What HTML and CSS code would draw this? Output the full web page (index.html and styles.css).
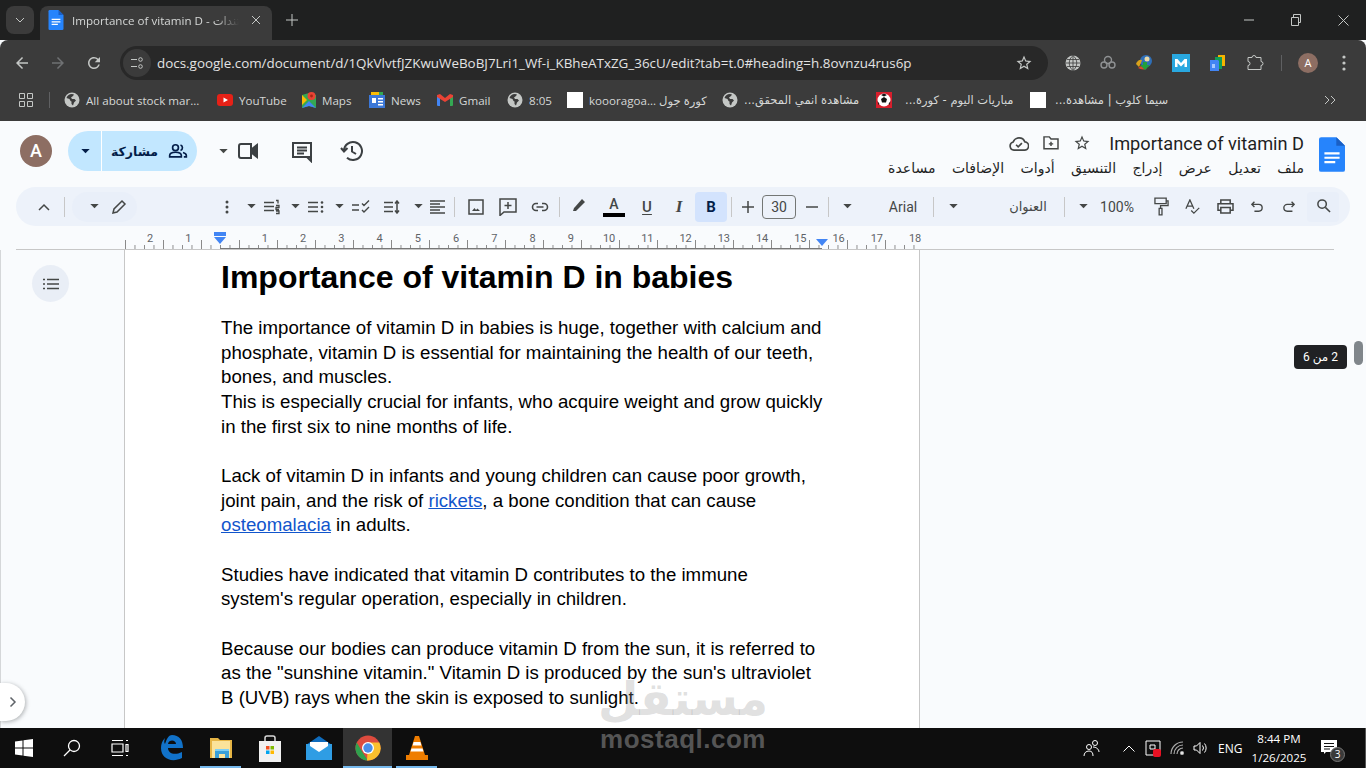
FILE: index.html
```html
<!doctype html>
<html lang="en">
<head>
  <meta charset="utf-8" />
  <title>Importance of vitamin D</title>
  <link rel="stylesheet" href="styles.css">
</head>
<body>
<svg class="defs" width="0" height="0">
  <symbol id="docs" viewBox="0 0 24 32"><path fill="#2684fc" d="M2 0h14l8 8v22a2 2 0 0 1-2 2H2a2 2 0 0 1-2-2V2a2 2 0 0 1 2-2z"/><path fill="#1a5fc4" d="M16 0l8 8h-8z"/><path fill="#fff" d="M5 14h14v2H5zM5 18h14v2H5zM5 22h10v2H5z"/></symbol>
  <symbol id="globe" viewBox="0 0 16 16"><circle cx="8" cy="8" r="7.5" fill="#c4c7c5"/><path fill="#3b3b3b" d="M8 2C5 2 3 4 2.5 6l3 1 1 2 1 .5V12l1.5 1.500 1-3 2-2-1.500-1.500H8L7 5.500l2-1.500L10 2.500z"/></symbol>
  <symbol id="caret" viewBox="0 0 10 6"><path fill="currentColor" d="M0 0h10L5 5z"/></symbol>
  <symbol id="star" viewBox="0 0 24 24"><path fill="currentColor" d="M22 9.240l-7.190-.62L12 2 9.190 8.630 2 9.240l5.460 4.730L5.820 21 12 17.270 18.180 21l-1.630-7.030L22 9.240zM12 15.400l-3.760 2.270 1-4.280-3.320-2.880 4.380-.38L12 6.100l1.710 4.040 4.380.38-3.320 2.880 1 4.280L12 15.400z"/></symbol>
</svg>

<div class="tabstrip">
  <div class="tabmenu"><svg width="12" height="12" viewBox="0 0 12 12"><path d="M2 4l4 4 4-4" class="ln" stroke-width="1.800"/></svg></div>
  <div class="tab">
    <svg class="favicon" width="16" height="20"><use href="#docs"/></svg>
    <span class="tabtitle">Importance of vitamin D - مستندات Google</span>
    <svg width="10" height="10" viewBox="0 0 10 10"><path d="M1 1l8 8M9 1l-8 8" class="ln" stroke-width="1.500"/></svg>
  </div>
  <svg class="newtab" width="12" height="12" viewBox="0 0 12 12"><path d="M6 0v12M0 6h12" class="ln" stroke-width="1.600"/></svg>
  <div class="winctl">
    <svg width="10" height="10" viewBox="0 0 10 10"><path d="M0 5h10" class="ln"/></svg>
    <svg width="10" height="12" viewBox="0 0 10 12"><path d="M.5 3.500h7v8h-7zM2.500 3.500v-3h7v8h-2" class="ln"/></svg>
    <svg width="11" height="11" viewBox="0 0 11 11"><path d="M.5.500l10 10M10.500.500l-10 10" class="ln"/></svg>
  </div>
</div>

<div class="navbar">
  <svg class="nav" width="18" height="18" viewBox="0 0 24 24"><path fill="#c4c7c5" d="M20 11H7.830l5.590-5.590L12 4l-8 8 8 8 1.410-1.410L7.830 13H20v-2z"/></svg>
  <svg class="nav" width="18" height="18" viewBox="0 0 24 24"><path fill="#6f7173" d="M12 4l-1.410 1.410L16.170 11H4v2h12.170l-5.580 5.590L12 20l8-8z"/></svg>
  <svg class="nav" width="18" height="18" viewBox="0 0 24 24"><path fill="#c4c7c5" d="M17.650 6.350A7.958 7.958 0 0 0 12 4c-4.420 0-7.990 3.580-7.990 8s3.570 8 7.990 8c3.730 0 6.840-2.550 7.730-6h-2.080A5.990 5.990 0 0 1 12 18c-3.310 0-6-2.690-6-6s2.690-6 6-6c1.660 0 3.140.69 4.220 1.780L13 11h7V4l-2.350 2.350z"/></svg>
  <div class="omni">
    <span class="tune"><svg width="14" height="14" viewBox="0 0 14 14"><path d="M1 3.500h6M1 10.500h6" class="ln" stroke-width="1.400"/><circle cx="10.500" cy="3.500" r="1.800" class="ln" stroke-width="1.400"/><circle cx="10.500" cy="10.500" r="1.800" class="ln" stroke-width="1.400"/></svg></span>
    <span class="url">docs.google.com/document/d/1QkVlvtfJZKwuWeBoBJ7Lri1_Wf-i_KBheATxZG_36cU/edit?tab=t.0#heading=h.8ovnzu4rus6p</span>
    <svg class="urlstar" width="18" height="18"><use href="#star"/></svg>
  </div>
  <div class="exts">
    <svg width="16" height="16" viewBox="0 0 16 16"><circle cx="8" cy="8" r="7.500" fill="#c4c7c5"/><path d="M.5 8h15M2 4.500h12M2 11.500h12M8 .5v15M8 .5c-5 4-5 11 0 15M8 .5c5 4 5 11 0 15" stroke="#3b3b3b" stroke-width=".8" fill="none"/></svg>
    <svg width="16" height="16" viewBox="0 0 16 16" fill="none" stroke="#8f9193" stroke-width="1.400"><circle cx="8" cy="5" r="3.500"/><circle cx="4" cy="10" r="3"/><circle cx="12" cy="10" r="3"/></svg>
    <svg width="18" height="18" viewBox="0 0 18 18"><circle cx="11" cy="7" r="6" fill="#2f6fb8"/><circle cx="12" cy="5" r="2.500" fill="#e9d9a8"/><path d="M1 10a5 5 0 0 1 6-4l-1 3-2 4z" fill="#d9a21b"/><path d="M3 14a7 3 0 0 0 9 1l-6-3z" fill="#d84a2b"/><path d="M8 8h4v3h3l-5 5-5-5h3z" fill="#22a03c"/></svg>
    <svg width="18" height="18" viewBox="0 0 18 18"><path fill="#29a8e0" d="M0 0h18v18H0z"/><path fill="#fff" d="M3 13V5h2.500L9 9l3.500-4H15v8h-2.500V9L9 12.500 5.500 9v4z"/></svg>
    <svg width="18" height="18" viewBox="0 0 18 18"><path fill="#f4b400" d="M9 1h7v11H9z"/><path fill="#0f9d58" d="M6 3h7v12H6z"/><path fill="#4285f4" d="M1 6h8l1 1v10H1z"/><path fill="#a6c8ff" d="M3 10h3v4H3z"/></svg>
    <svg width="18" height="18" viewBox="0 0 18 18"><path d="M2 3.500h4a2 2 0 0 1 4 0h5v4a2 2 0 0 1 0 4v4H2v-4a2 2 0 0 0 0-4z" class="ln" stroke-width="1.500"/></svg>
  </div>
  <i class="navsep"></i>
  <span class="profile">A</span>
  <svg class="kebab" width="4" height="16" viewBox="0 0 4 16"><circle cx="2" cy="2" r="1.600" fill="#c4c7c5"/><circle cx="2" cy="8" r="1.600" fill="#c4c7c5"/><circle cx="2" cy="14" r="1.600" fill="#c4c7c5"/></svg>
</div>

<div class="bookmarks">
  <svg width="16" height="16" viewBox="0 0 16 16"><path d="M1.500 1.500h5v5h-5zM9.500 1.500h5v5h-5zM1.500 9.500h5v5h-5zM9.500 9.500h5v5h-5z" class="ln" stroke-width="1.400"/></svg>
  <i class="bmsep"></i>
  <a class="bm"><svg width="16" height="16"><use href="#globe"/></svg>All about stock mar...</a>
  <a class="bm"><svg width="16" height="16" viewBox="0 0 16 16"><rect y="2" width="16" height="12" rx="3" fill="#e62117"/><path d="M6.500 5.500v5L11 8z" fill="#fff"/></svg>YouTube</a>
  <a class="bm"><svg width="14" height="18" viewBox="0 0 14 18"><path fill="#34a853" d="M0 4l7-2 7 2v13l-7-2-7 2z"/><path fill="#4285f4" d="M0 17l7-7 7 7-7-2z"/><path fill="#fbbc04" d="M0 4l5 5-5 5z"/><circle cx="9.500" cy="5" r="4" fill="#ea4335"/><circle cx="9.500" cy="5" r="1.400" fill="#a52714"/></svg>Maps</a>
  <a class="bm"><svg width="16" height="16" viewBox="0 0 16 16"><path fill="#fbbc04" d="M2 0h8v4H2z"/><path fill="#34a853" d="M10 0h4v4h-4z"/><path fill="#3c78d8" d="M0 3h16v13H0z"/><path fill="#fff" d="M3 6h4v5H3zM9 6h5v1.500H9zM9 9h5v1.500H9zM9 12h5v1.500H9z"/></svg>News</a>
  <a class="bm"><svg width="16" height="12" viewBox="0 0 16 12"><path fill="#4285f4" d="M0 1h3v11H1a1 1 0 0 1-1-1z"/><path fill="#34a853" d="M13 1h3v10a1 1 0 0 1-1 1h-2z"/><path fill="#ea4335" d="M0 1l3-1 5 4 5-4 3 1v2L8 8 0 3z"/></svg>Gmail</a>
  <a class="bm"><svg width="16" height="16"><use href="#globe"/></svg>8:05</a>
  <a class="bm"><b class="blank"></b>koooragoa... كورة جول</a>
  <a class="bm"><svg width="16" height="16"><use href="#globe"/></svg><span class="ar" dir="rtl">مشاهدة انمي المحقق...</span></a>
  <a class="bm wide"><svg width="16" height="16" viewBox="0 0 16 16"><path fill="#d81e2c" d="M0 0h16v16H0z"/><circle cx="8" cy="8" r="6.500" fill="#fff"/><path d="M8 5l3 2-1 3.500H6L5 7zM8 1.500L11 3l-3 1.500L5 3zM1.500 9l2 3-1 1zM14.500 9l-2 3 1 1z" fill="#111"/></svg><span class="ar" dir="rtl">مباريات اليوم - كورة...</span></a>
  <a class="bm wide2"><b class="blank"></b><span class="ar" dir="rtl">سيما كلوب | مشاهدة...</span></a>
  <svg class="more" width="12" height="10" viewBox="0 0 12 10"><path d="M1 1l4 4-4 4M7 1l4 4-4 4" class="ln" stroke-width="1.400"/></svg>
</div>

<div class="docs">
  <header class="dochead">
    <div class="headleft">
      <span class="docavatar">A</span>
      <div class="share">
        <span class="sharecaret"><svg width="9" height="5"><use href="#caret"/></svg></span>
        <span class="sharemain">
          <span class="ar">مشاركة</span>
          <svg width="20" height="20" viewBox="0 0 24 24" fill="none" stroke="#041e49" stroke-width="2"><circle cx="9" cy="8" r="3.500"/><path d="M2 19v-1.500c0-2.500 3-4 7-4s7 1.500 7 4V19zM15 4.700a3.500 3.500 0 0 1 0 6.600M18 13.800c2.500.7 4 2 4 3.700V19h-3"/></svg>
        </span>
      </div>
      <svg class="vidcaret" width="9" height="5"><use href="#caret"/></svg>
      <svg class="hicon video" width="24" height="24" viewBox="0 0 24 24" fill="none" stroke="#3c4043" stroke-width="2"><path d="M3 7a2 2 0 0 1 2-2h10v14H5a2 2 0 0 1-2-2z"/><path d="M16 10l5-4v12l-5-4z" fill="#3c4043"/></svg>
      <svg class="hicon comment" width="24" height="24" viewBox="0 0 24 24" fill="none" stroke="#3c4043" stroke-width="2"><path d="M3 4h18v14H3zM21 18v4l-4-4M7 8.500h10M7 11.500h10M7 14.500h7"/></svg>
      <svg class="hicon history" width="24" height="24" viewBox="0 0 24 24" fill="none" stroke="#3c4043" stroke-width="2"><path d="M4 12a9 9 0 1 1 3 6.700M1 9l3 3.500L7.500 9M12 7v5.500l4 2.500"/></svg>
    </div>
    <div class="headright">
      <div class="titleblock">
        <div class="titlerow">
          <svg width="20" height="17" viewBox="0 0 24 20" fill="none" stroke="#444746" stroke-width="2"><path d="M6 18a5 5 0 0 1-1-9.800A7.500 7.500 0 0 1 19 8a5 5 0 0 1-1 10zM8.500 11.500l2.500 2.500 4.500-4.500"/></svg>
          <svg width="16" height="14" viewBox="0 0 18 16" fill="none" stroke="#444746" stroke-width="1.700"><path d="M1 3V14.500h16V3.500H9L7 1H1zM9 6.500v5M6.500 9h5"/></svg>
          <svg class="titlestar" width="18" height="18"><use href="#star"/></svg>
          <span class="doctitle">Importance of vitamin D</span>
        </div>
        <nav class="menu">
          <span>ملف</span><span>تعديل</span><span>عرض</span><span>إدراج</span><span>التنسيق</span><span>أدوات</span><span>الإضافات</span><span>مساعدة</span>
        </nav>
      </div>
      <svg class="doclogo" width="26" height="35"><use href="#docs"/></svg>
    </div>
  </header>

  <div class="toolbar">
    <span class="t"><svg width="12" height="8" viewBox="0 0 12 8"><path d="M1 7l5-5 5 5" class="tl" stroke-width="1.500"/></svg></span>
    <i class="sep ml4"></i>
    <span class="pencil ml7">
      <svg width="9" height="5"><use href="#caret"/></svg>
      <svg width="16" height="16" viewBox="0 0 16 16"><path d="M2 14l1-4 8-8 3 3-8 8z" class="tl" stroke-width="1.500"/></svg>
    </span>
    <span class="t ml74"><svg width="4" height="14" viewBox="0 0 4 14"><circle cx="2" cy="2" r="1.500"/><circle cx="2" cy="7" r="1.500"/><circle cx="2" cy="12" r="1.500"/></svg></span>
    <span class="c w16"><svg width="9" height="5"><use href="#caret"/></svg></span>
    <span class="t w26"><svg width="16" height="16" viewBox="0 0 16 16"><path d="M0 3.500h10M0 7.500h10M0 11.500h10M12 1.500h2v3M12 6.500h3v2h-3v2h3M12 12h3v2.500h-3" class="tl" stroke-width="1.300"/></svg></span>
    <span class="c w20"><svg width="9" height="5"><use href="#caret"/></svg></span>
    <span class="t w22"><svg width="16" height="14" viewBox="0 0 16 14"><path d="M0 2.500h10M0 7h10M0 11.500h10" class="tl" stroke-width="1.500"/><circle cx="14" cy="2.500" r="1.300"/><circle cx="14" cy="7" r="1.300"/><circle cx="14" cy="11.500" r="1.300"/></svg></span>
    <span class="c w24"><svg width="9" height="5"><use href="#caret"/></svg></span>
    <span class="t w20"><svg width="18" height="14" viewBox="0 0 18 14"><path d="M0 5h7M0 10h7M10 3.500l2 2L17 .5M10 10l2 2 5-5" class="tl" stroke-width="1.400"/></svg></span>
    <span class="t w26 ml8"><svg width="16" height="14" viewBox="0 0 16 14"><path d="M0 2.500h9M0 7h9M0 11.500h9M13 2v10M11 3.500L13 1l2 2.500M11 10.500l2 2.500 2-2.500" class="tl" stroke-width="1.500"/></svg></span>
    <span class="c w20 ml3"><svg width="9" height="5"><use href="#caret"/></svg></span>
    <span class="t w18"><svg width="15" height="14" viewBox="0 0 15 14"><path d="M0 1h15M0 4h10M0 7h15M0 10h10M0 13h15" class="tl" stroke-width="1.300"/></svg></span>
    <i class="sep ml8"></i>
    <span class="t ml5"><svg width="16" height="16" viewBox="0 0 16 16"><path d="M1 1h14v14H1z" class="tl" stroke-width="1.500"/><path d="M4 12l2.500-3 1.500 2 1.500-1.500L12 12z"/></svg></span>
    <span class="t"><svg width="18" height="18" viewBox="0 0 18 18"><path d="M1 1h16v13H5l-4 3.500zM9 4v7M5.500 7.500h7" class="tl" stroke-width="1.500"/></svg></span>
    <span class="t"><svg width="18" height="10" viewBox="0 0 18 10"><path d="M7 1.500H5a3.500 3.500 0 0 0 0 7h2M11 1.500h2a3.500 3.500 0 0 1 0 7h-2M5.500 5h7" class="tl" stroke-width="1.600"/></svg></span>
    <i class="sep ml3"></i>
    <span class="t ml4 thigh"><svg width="16" height="16" viewBox="0 0 16 16"><path d="M1 14h3l1-1 8-8-3-3-7 8-1 1z"/></svg></span>
    <span class="t ml2 tcolor"><b>A</b><i></i></span>
    <span class="t ml1 tul">U</span>
    <span class="t tit">I</span>
    <span class="t tbold">B</span>
    <i class="sep ml4"></i>
    <span class="t w28 ml2"><svg width="12" height="12" viewBox="0 0 12 12"><path d="M6 0v12M0 6h12" class="tl" stroke-width="1.500"/></svg></span>
    <span class="fsize">30</span>
    <span class="t"><svg width="12" height="2" viewBox="0 0 12 2"><path d="M0 1h12" class="tl" stroke-width="1.500"/></svg></span>
    <i class="sep"></i>
    <span class="c w20 ml8"><svg width="9" height="5"><use href="#caret"/></svg></span>
    <span class="txt w60 ml16">Arial</span>
    <i class="sep"></i>
    <span class="c w20 ml9"><svg width="9" height="5"><use href="#caret"/></svg></span>
    <span class="txt ar w72 ml29">العنوان</span>
    <i class="sep"></i>
    <span class="c w20 ml8"><svg width="9" height="5"><use href="#caret"/></svg></span>
    <span class="txt w48">100%</span>
    <span class="t ml4"><svg width="15" height="19" viewBox="0 0 16 20"><path d="M1 1h12v6H1zM13 4h2v5H7v3M5.500 12h3v7h-3z" class="tl" stroke-width="1.400"/></svg></span>
    <span class="t"><svg width="16" height="16" viewBox="0 0 18 18"><path d="M1 11L5.500 1 10 11M2.500 8h6M7 13l3 3 6-6" class="tl" stroke-width="1.400"/></svg></span>
    <span class="t"><svg width="17" height="15" viewBox="0 0 18 16"><path d="M4 5V1h10v4M4 12H1V5h16v7h-3M4 9h10v6H4z" class="tl" stroke-width="1.600"/></svg></span>
    <span class="t"><svg width="12" height="12" viewBox="0 0 14 14"><path d="M4 1L1 4l3 3M1 4h8a4 4 0 0 1 0 8H4" class="tl" stroke-width="1.600"/></svg></span>
    <span class="t"><svg width="12" height="12" viewBox="0 0 14 14"><path d="M10 1l3 3-3 3M13 4H5a4 4 0 0 0 0 8h6" class="tl" stroke-width="1.600"/></svg></span>
    <span class="t tsearch ml2"><svg width="15" height="15" viewBox="0 0 16 16"><circle cx="6.500" cy="6.500" r="4.500" class="tl" stroke-width="1.600"/><path d="M10 10l5 5" class="tl" stroke-width="1.600"/></svg></span>
  </div>

  <div class="ruler">
    <div class="marks">
      <div class="labels"><span>2</span><span>1</span><span></span><span>1</span><span>2</span><span>3</span><span>4</span><span>5</span><span>6</span><span>7</span><span>8</span><span>9</span><span>10</span><span>11</span><span>12</span><span>13</span><span>14</span><span>15</span><span>16</span><span>17</span><span>18</span></div>
      <b class="indent-bar"></b><b class="indent-l"></b><b class="indent-r"></b>
    </div>
  </div>

  <div class="workspace">
    <aside class="outline">
      <span class="outlinebtn"><svg width="16" height="12" viewBox="0 0 16 12"><path d="M4 1.500h12M4 6h12M4 10.500h12M0 1.500h2M0 6h2M0 10.500h2" class="tl" stroke-width="1.500"/></svg></span>
      <span class="expand"><svg width="8" height="12" viewBox="0 0 8 12"><path d="M1.500 1.500L6 6l-4.500 4.500" fill="none" stroke="#5f6368" stroke-width="1.500"/></svg></span>
    </aside>
    <main class="page">
      <h1>Importance of vitamin D in babies</h1>
      <p>The importance of vitamin D in babies is huge, together with calcium and phosphate, vitamin D is essential for maintaining the health of our teeth, bones, and muscles.<br>This is especially crucial for infants, who acquire weight and grow quickly in the first six to nine months of life.</p>
      <p>Lack of vitamin D in infants and young children can cause poor growth, joint pain, and the risk of <a>rickets</a>, a bone condition that can cause <a>osteomalacia</a> in adults.</p>
      <p>Studies have indicated that vitamin D contributes to the immune system's regular operation, especially in children.</p>
      <p>Because our bodies can produce vitamin D from the sun, it is referred to as the "sunshine vitamin." Vitamin D is produced by the sun's ultraviolet B (UVB) rays when the skin is exposed to sunlight.</p>
    </main>
    <div class="scrollside">
      <span class="pagetip" dir="rtl">2 من 6</span>
      <span class="thumb"></span>
    </div>
  </div>
</div>

<div class="taskbar">
  <span class="tk"><svg width="18" height="18" viewBox="0 0 18 18"><path fill="#fff" d="M0 2.500L7.500 1.500v7H0zM8.500 1.300L18 0v8.500H8.500zM0 9.500h7.500v7L0 15.500zM8.500 9.500H18V18l-9.500-1.300z"/></svg></span>
  <span class="tk"><svg width="18" height="18" viewBox="0 0 18 18" fill="none" stroke="#fff" stroke-width="1.300"><circle cx="11" cy="7" r="5.500"/><path d="M7 11l-6 6"/></svg></span>
  <span class="tk"><svg width="18" height="18" viewBox="0 0 18 18" fill="none" stroke="#fff" stroke-width="1.200"><path d="M1 5h11v8H1zM1 1.500h11M1 16.500h11M15 1.500h2M15 5.500h2v7h-2zM15 16.500h2"/></svg></span>
  <div class="apps">
    <span class="app"><svg width="24" height="28" viewBox="0 0 24 28"><path fill="#1172c9" d="M12 1c7 0 11 5 11 13H8c0 5 6 8 14 4v6c-10 5-21 1-21-10 0-4 1-7 4-10-1 3-1 5 0 6 2-6 4-9 7-9zM8 10h8c0-4-7-5-8 0z"/></svg></span>
    <span class="app on"><svg width="24" height="26" viewBox="0 0 24 26"><path fill="#e6b545" d="M1 3h8l2 2h12v18H1z"/><path fill="#fbe39a" d="M3 6h18v17H3z"/><path fill="#3aa0d9" d="M6 14h14v9h-4v-4h-6v4H6z"/><path fill="#7fd0f5" d="M6 14h14v2H6z"/></svg></span>
    <span class="app"><svg width="24" height="28" viewBox="0 0 24 28"><path d="M7 9V4a2 2 0 0 1 2-2h6a2 2 0 0 1 2 2v5" fill="none" stroke="#d9d9d9" stroke-width="1.500"/><path fill="#f1f1f1" d="M1 7h22v21H1z"/><path fill="#f25022" d="M8 12h3.500v3.500H8z"/><path fill="#7fba00" d="M12.500 12H16v3.500h-3.500z"/><path fill="#00a4ef" d="M8 16.500h3.500V20H8z"/><path fill="#ffb900" d="M12.500 16.500H16V20h-3.500z"/></svg></span>
    <span class="app"><svg width="26" height="24" viewBox="0 0 26 24"><path fill="#0f6cbd" d="M13 0l13 9v2H0V9z"/><path fill="#2f9de4" d="M0 8h26v16H0z"/><path fill="#fff" d="M4 6h18v4l-9 6-9-6z"/></svg></span>
    <span class="app active on"><svg width="26" height="26" viewBox="0 0 26 26"><circle cx="13" cy="13" r="12.500" fill="#dd4b3e"/><path fill="#30a14e" d="M1.700 7.500L8 18l5 7.500A12.500 12.500 0 0 1 1.700 7.500z"/><path fill="#fbc02d" d="M24.300 7.500H13l-1 18A12.500 12.500 0 0 0 24.300 7.500z"/><circle cx="13" cy="13" r="6" fill="#fff"/><circle cx="13" cy="13" r="4.700" fill="#4a8ee8"/></svg></span>
    <span class="app on"><svg width="22" height="26" viewBox="0 0 22 26"><path fill="#ef7d00" d="M9 1h4l6 19H3z"/><path fill="#fff" d="M7.600 7h6.800l1 3.500H6.600zM5.500 13.500h11l1 3H4.500z"/><path fill="#ef7d00" d="M0 20h22v5H0z"/></svg></span>
  </div>
  <div class="tray">
    <svg class="tperson" width="18" height="18" viewBox="0 0 18 18" fill="none" stroke="#fff"><circle cx="6" cy="8" r="2.500"/><circle cx="12" cy="4" r="2.500"/><path d="M1 17c0-3 2-5 5-5s4 2 4 5M10 8c3 0 6 2 6 5"/></svg>
    <svg class="tchev" width="12" height="7" viewBox="0 0 12 7" fill="none" stroke="#fff"><path d="M.5 6.500L6 1l5.500 5.500"/></svg>
    <svg class="tsec" width="16" height="18" viewBox="0 0 16 18"><path d="M1 2h14v14H1z" fill="#111" stroke="#fff"/><path d="M5 6h5v4H5z" fill="none" stroke="#fff"/><rect x="8" y="10" width="8" height="8" rx="2" fill="#e81123"/></svg>
    <svg class="twifi" width="16" height="14" viewBox="0 0 16 14" fill="none" stroke="#aaa" stroke-width="1.200"><path d="M1 13A12 12 0 0 1 13 1M4 13a9 9 0 0 1 9-9M7 13a6 6 0 0 1 6-6"/><circle cx="12" cy="12" r="1.500" fill="#fff"/></svg>
    <svg class="tvol" width="16" height="14" viewBox="0 0 16 14" fill="none" stroke="#fff"><path d="M1 5h2.500L7 1.500v11L3.500 9H1zM9.500 4.500a4 4 0 0 1 0 5M11.500 2.500a7 7 0 0 1 0 9"/></svg>
    <span class="teng">ENG</span>
    <span class="clock">8:44 PM<br>1/26/2025</span>
    <span class="notif"><svg width="16" height="14" viewBox="0 0 16 14"><path fill="#fff" d="M0 0h16v12H5l-2 2v-2H0z"/><path stroke="#111" d="M3 3.500h10M3 6.500h10M3 9h6"/></svg><b>3</b></span>
    <i class="showdesk"></i>
  </div>
</div>

<div class="watermark"><span class="ar">مستقل</span><b>mostaql.com</b></div>
</body>
</html>
```

FILE: styles.css
```css
*{box-sizing:border-box}
html,body{height:100%}
body{
  margin:0;
  width:1366px;
  height:768px;
  overflow:hidden;
  display:flex;
  flex-direction:column;
  position:relative;
  font-family:"Open Sans","DejaVu Sans",sans-serif;
  background:#f9fbfd;
}
.defs{position:absolute}
.ln{fill:none;stroke:#c4c7c5;stroke-width:1}
.tl{fill:none;stroke:#444746}
svg{display:block;flex:none}
.ar{font-family:"DejaVu Sans",sans-serif}

/* ===== chrome ===== */
.tabstrip{
  height:40px;
  flex:none;
  background:#1f2020;
  display:flex;
  align-items:flex-start;
  padding:6px 0 0 6px;
}
.tabmenu{
  width:28px;height:28px;
  background:#3b3b3b;
  border-radius:8px;
  display:flex;align-items:center;justify-content:center;
}
.tab{
  width:232px;height:34px;
  margin-left:6px;
  padding:0 0 6px 8px;
  background:#3b3b3b;
  border-radius:8px 8px 0 0;
  display:flex;align-items:center;
  color:#d5d7d6;
}
.tabtitle{
  width:167px;
  margin-left:8px;
  margin-right:12px;
  font-size:11.6px;
  white-space:nowrap;
  overflow:hidden;
  -webkit-mask-image:linear-gradient(90deg,#000 85%,transparent);
  mask-image:linear-gradient(90deg,#000 85%,transparent);
}
.newtab{margin:8px 0 0 14px}
.winctl{
  margin-left:auto;
  display:flex;
  align-items:center;
  gap:37px;
  padding:8px 17px 0 0;
}

.navbar{
  height:45px;
  flex:none;
  background:#3b3b3b;
  border-radius:8px 8px 0 0;
  display:flex;
  align-items:center;
  padding:0 18px 0 13px;
}
.nav{margin-right:18px}
.nav:nth-child(3){margin-right:17px}
.omni{
  width:928px;height:34px;
  background:#282828;
  border-radius:17px;
  display:flex;align-items:center;
  padding:0 15px 0 3px;
  color:#e3e3e3;
}
.tune{
  width:28px;height:28px;border-radius:50%;
  background:#3b3b3b;
  display:flex;align-items:center;justify-content:center;
}
.url{
  margin-left:6px;
  font-size:13.42px;
  white-space:nowrap;
}
.urlstar{margin-left:auto;color:#c4c7c5}
.exts{
  display:flex;align-items:center;
  margin-left:17px;
  gap:19px;
}
.navsep{width:1px;height:16px;background:#5f6062;margin-left:17px}
.profile{
  width:20px;height:20px;border-radius:50%;
  background:#8d6e63;color:#fff;
  font-size:11px;line-height:20px;text-align:center;
  margin-left:16px;
}
.kebab{margin-left:24px}

.bookmarks{
  height:36px;
  flex:none;
  background:#3b3b3b;
  display:grid;
  grid-template-columns:31px 15px 153px 85px 67px 68px 70px 60px 155px 154px 154px 294px 16px;
  align-items:center;
  padding:0 0 6px 18px;
  color:#d5d7d6;
  font-size:11.6px;
}
.bmsep{width:1px;height:16px;background:#5f6062}
.bm{display:flex;align-items:center;gap:6px;white-space:nowrap}
.bm .ar{font-size:11.5px}
.bm.wide{gap:13px}
.bm.wide2{gap:9px}
.blank{width:16px;height:16px;background:#fff;flex:none}

/* ===== docs ===== */
.docs{flex:1;min-height:0;display:flex;flex-direction:column;position:relative}
.dochead{
  height:66px;
  flex:none;
  display:flex;
  justify-content:space-between;
  padding:0 20px;
}
.headleft{display:flex;align-items:center;height:60px}
.docavatar{
  width:32px;height:32px;border-radius:50%;
  background:#8d6e63;color:#fff;
  font:500 18px/32px Roboto,sans-serif;
  text-align:center;
}
.share{
  width:129px;height:40px;
  margin-left:16px;
  background:#c2e7ff;
  border-radius:20px;
  display:flex;
  color:#041e49;
}
.sharecaret{
  width:34px;
  display:flex;align-items:center;justify-content:center;
  border-right:1px solid #fff;
  padding-left:2px;
}
.sharemain{
  flex:1;
  display:flex;align-items:center;justify-content:center;gap:10px;
  font-size:12.5px;font-weight:600;
}
.vidcaret{margin-left:22px;color:#444746}
.video{margin-left:8px}
.comment{margin-left:30px}
.history{margin-left:26px}
.headright{display:flex;align-items:flex-start;padding-right:1px;gap:15px}
.titleblock{display:flex;flex-direction:column;align-items:flex-end}
.titlerow{display:flex;align-items:center;height:26px;margin-top:9px;gap:14px}
.titlestar{color:#444746}
.doctitle{font:400 18.2px Roboto,sans-serif;color:#1f1f1f;margin-left:4px}
.menu{
  display:flex;
  flex-direction:row-reverse;
  gap:16.5px;
  margin-top:4px;
  font-size:14px;
  color:#1f1f1f;
  font-family:"DejaVu Sans",sans-serif;
}
.doclogo{margin-top:16px}

.toolbar{
  height:39px;
  flex:none;
  margin:0 16px;
  background:#edf2fa;
  border-radius:20px;
  display:flex;
  align-items:center;
  padding-left:12px;
  color:#444746;
  font-family:Roboto,sans-serif;
}
.toolbar svg{fill:#444746}
.t{width:32px;height:30px;flex:none;display:flex;align-items:center;justify-content:center}
.c{height:30px;flex:none;display:flex;align-items:center;justify-content:center}
.sep{width:1px;height:20px;background:#c7c7c7;flex:none}
.w16{width:16px}.w18{width:18px}.w20{width:20px}.w22{width:22px}.w24{width:24px}.w26{width:26px}.w28{width:28px}
.w48{width:48px}.w60{width:60px}.w72{width:72px}
.ml1{margin-left:1px}.ml2{margin-left:2px}.ml3{margin-left:3px}.ml4{margin-left:4px}.ml5{margin-left:5px}
.ml7{margin-left:7px}.ml8{margin-left:8px}.ml9{margin-left:9px}.ml16{margin-left:16px}.ml29{margin-left:29px}.ml74{margin-left:74px}
.pencil{
  width:65px;height:30px;flex:none;
  background:#e9eff9;
  border-radius:15px;
  display:flex;align-items:center;
  gap:12px;
  padding-left:18px;
}
.thigh{padding-bottom:4px}
.txt{font-size:14px;text-align:center;flex:none;white-space:nowrap}
.txt.ar{font-size:13px}
.tcolor{flex-direction:column;gap:1px}
.tcolor b{font-weight:500;font-size:14px;line-height:15px}
.tcolor i{width:22px;height:4px;background:#000}
.tul{font-size:15px;font-weight:500;text-decoration:underline;text-underline-offset:2px}
.tit{font-family:"Liberation Serif",serif;font-size:17px;font-style:italic;font-weight:700}
.tbold{background:#d3e3fd;border-radius:4px;color:#041e49;font-size:15px;font-weight:700}
.fsize{
  width:34px;height:24px;flex:none;
  border:1px solid #747775;
  border-radius:4px;
  font-size:14px;line-height:22px;text-align:center;
}
.tsearch{background:#e9eff9;border-radius:4px;padding-bottom:3px}

.ruler{
  height:24px;
  flex:none;
  width:1318px;
  margin:0 auto 0 16px;
  padding:6px 0 0 109px;
  border-bottom:1px solid #c7c7c7;
}
.marks{
  position:relative;
  width:794px;height:17px;
  background-image:
    linear-gradient(#777,#777),
    linear-gradient(90deg,#8a8a8a 1px,transparent 1px),
    linear-gradient(90deg,#8a8a8a 1px,transparent 1px);
  background-size:602px 1px,38px 9px,9.5px 4px;
  background-position:95px 100%,0 100%,0 100%;
  background-repeat:no-repeat,repeat-x,repeat-x;
}
.labels{
  display:flex;
  padding-left:6px;
  font:400 11px/14px Roboto,sans-serif;
  color:#5f6368;
}
.labels span{width:38.25px;flex:none;text-align:center}
.indent-bar{position:absolute;left:89px;top:0;width:12px;height:4px;background:#4285f4}
.indent-l,.indent-r{position:absolute;width:0;height:0;border:6px solid transparent;border-bottom:0;border-top:7px solid #4285f4}
.indent-l{left:89px;top:5px}
.indent-r{left:691px;top:7px}

.workspace{flex:1;min-height:0;display:flex;position:relative}
.outline{width:124px;flex:none;border-left:1px solid #d5d7d9;position:relative}
.outlinebtn{
  position:absolute;left:31px;top:15px;
  width:37px;height:37px;border-radius:50%;
  background:#e9eef6;
  display:flex;align-items:center;justify-content:center;
}
.expand{
  position:absolute;left:-1px;top:433px;
  width:25px;height:38px;
  background:#fff;
  border-radius:0 19px 19px 0;
  box-shadow:1px 1px 4px rgba(60,64,67,.4);
  display:flex;align-items:center;justify-content:center;
}
.page{
  width:796px;
  flex:none;
  background:#fff;
  border-left:1px solid #c7c7c7;
  border-right:1px solid #c7c7c7;
  padding:6px 96px 0 96px;
  font-family:"Liberation Sans",Arial,sans-serif;
  color:#000;
  overflow:hidden;
}
.page h1{margin:0 0 18px;font-size:32px;line-height:42px;font-weight:700}
.page p{margin:0 0 24.67px;font-size:18.667px;line-height:24.67px}
.page a{color:#1155cc;text-decoration:underline}
.scrollside{flex:1;position:relative}
.pagetip{
  position:absolute;left:374px;top:95px;
  width:53px;height:24px;
  background:#202124;color:#fff;
  border-radius:4px;
  font:400 12px/24px Roboto,"DejaVu Sans",sans-serif;
  text-align:center;
}
.thumb{position:absolute;left:434px;top:91px;width:9px;height:24px;border-radius:5px;background:#80868b}

/* ===== taskbar ===== */
.taskbar{
  height:40px;
  flex:none;
  background:#0e0e0e;
  display:flex;
  align-items:center;
  color:#fff;
}
.tk{width:48px;height:40px;flex:none;display:flex;align-items:center;justify-content:center}
.apps{display:flex;margin-left:3px}
.app{width:49px;height:40px;display:flex;align-items:center;justify-content:center;position:relative}
.app.active{background:#333}
.app.on::after{content:"";position:absolute;left:4px;right:4px;bottom:0;height:2px;background:#76b9ed}
.app.active::after{left:0;right:0}
.tray{margin-left:auto;display:flex;align-items:center;height:40px}
.tchev{margin-left:22px}
.tsec{margin-left:10px}
.twifi{margin-left:9px}
.tvol{margin-left:7px}
.teng{margin-left:9px;font-size:12px;width:25px}
.clock{width:72px;font-size:11.6px;line-height:19px;text-align:center}
.notif{margin-left:6px;width:24px;height:24px;position:relative;padding-top:4px}
.notif b{
  position:absolute;left:9px;top:11px;
  width:15px;height:15px;border-radius:50%;
  background:#3a3a3a;border:1px solid #777;
  font:400 10px/13px "Open Sans",sans-serif;text-align:center;
}
.showdesk{width:1px;height:40px;background:#555;margin-left:20px}

.watermark{
  position:absolute;
  left:600px;top:672px;
  width:166px;
  display:flex;flex-direction:column;align-items:center;
  pointer-events:none;
  color:rgba(150,150,150,.3);
}
.watermark .ar{font-size:46.5px;line-height:54px;font-weight:700;height:54px}
.watermark b{
  font:700 26px/26px "Liberation Sans",sans-serif;
  letter-spacing:.5px;
  color:#555;
}
```
